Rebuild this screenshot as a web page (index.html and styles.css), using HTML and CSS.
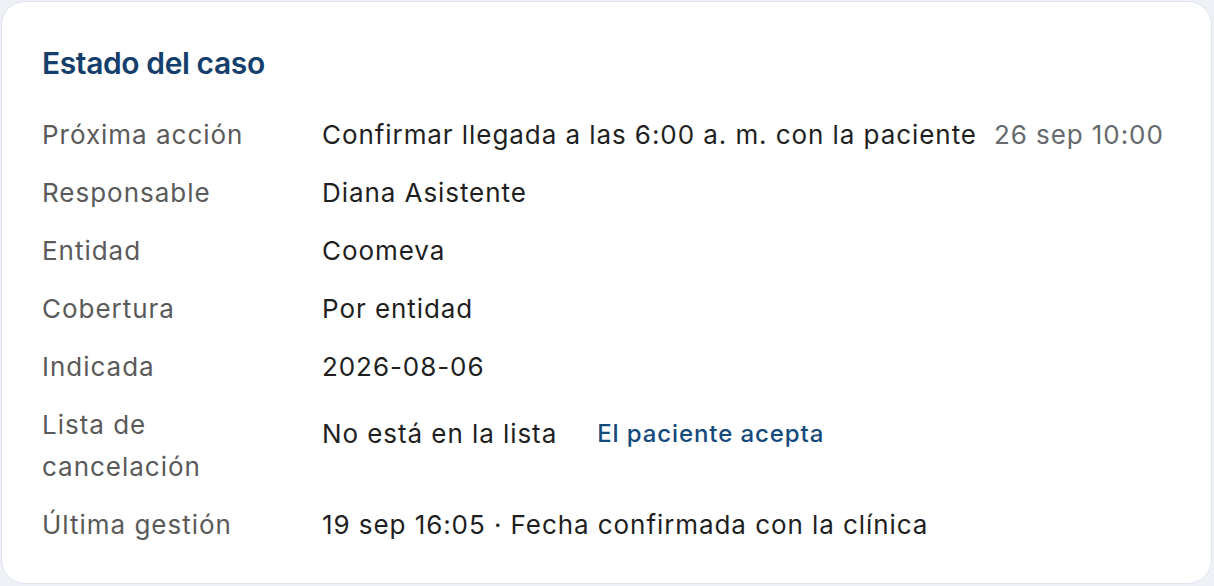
FILE: index.html
```html
<!DOCTYPE html>
<html lang="es">
<head>
<meta charset="utf-8">
<title>Estado del caso</title>
<link rel="stylesheet" href="styles.css">
</head>
<body>
<section class="card">
  <h2 class="card-title">Estado del caso</h2>
  <dl class="details">
    <div class="row">
      <dt class="label">Próxima acción</dt>
      <dd class="value"><span>Confirmar llegada a las 6:00 a. m. con la paciente</span><span class="muted">26 sep 10:00</span></dd>
    </div>
    <div class="row">
      <dt class="label">Responsable</dt>
      <dd class="value">Diana Asistente</dd>
    </div>
    <div class="row">
      <dt class="label">Entidad</dt>
      <dd class="value">Coomeva</dd>
    </div>
    <div class="row">
      <dt class="label">Cobertura</dt>
      <dd class="value">Por entidad</dd>
    </div>
    <div class="row">
      <dt class="label">Indicada</dt>
      <dd class="value">2026-08-06</dd>
    </div>
    <div class="row">
      <dt class="label">Lista de cancelación</dt>
      <dd class="value value-action"><span>No está en la lista</span><button class="link-btn" type="button">El paciente acepta</button></dd>
    </div>
    <div class="row">
      <dt class="label">Última gestión</dt>
      <dd class="value">19 sep 16:05 · Fecha confirmada con la clínica</dd>
    </div>
  </dl>
</section>
</body>
</html>
```
FILE: styles.css
```css
* { box-sizing: border-box; }
html, body { margin: 0; padding: 0; }
body {
  background: #eef2f7;
  font-family: Inter, "Noto Sans", "Liberation Sans", sans-serif;
  padding: 1px 2px 2px 1px;
  height: 586px;
}
.card {
  background: #ffffff;
  border: 1px solid #dde4ee;
  border-radius: 24px;
  padding: 42px 40px 37px 40px;
  height: 583px;
}
.card-title {
  margin: 0 0 32px 0;
  font-size: 30px;
  line-height: 38px;
  font-weight: 600;
  letter-spacing: -0.4px;
  color: #143f6c;
}
.details {
  margin: 0;
  display: flex;
  flex-direction: column;
  gap: 16px;
}
.row {
  display: grid;
  grid-template-columns: 240px 1fr;
  column-gap: 40px;
  align-items: start;
}
.label {
  margin: 0;
  font-size: 26px;
  line-height: 42px;
  letter-spacing: 0.98px;
  color: #5a5a5a;
}
.value {
  margin: 0;
  font-size: 26px;
  line-height: 42px;
  letter-spacing: 0.93px;
  color: #1f1f1f;
  display: flex;
  align-items: center;
  gap: 17px;
}
.muted { color: #666a6e; }
.value-action { gap: 22px; }
.link-btn {
  font-family: inherit;
  font-size: 24px;
  line-height: 36px;
  font-weight: 500;
  letter-spacing: 0.9px;
  color: #154a7c;
  background: transparent;
  border: 0;
  padding: 12px 18px;
  cursor: pointer;
}
```
